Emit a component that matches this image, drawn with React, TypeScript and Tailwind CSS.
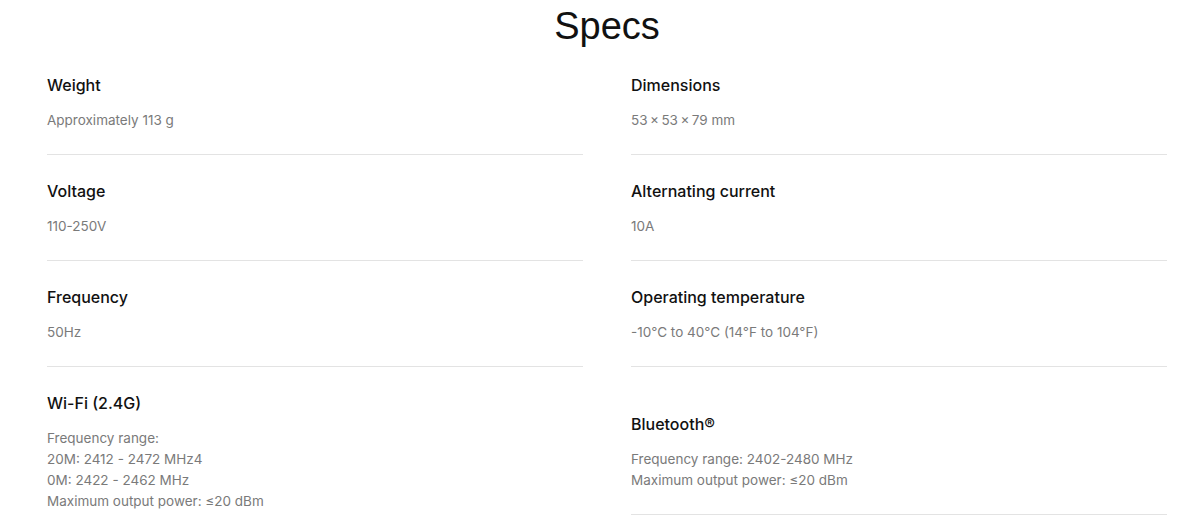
import React from "react";

type Spec = { title: string; lines: string[] };

const rows: [Spec, Spec][] = [
  [
    { title: "Weight", lines: ["Approximately 113 g"] },
    { title: "Dimensions", lines: ["53\u2009×\u200953\u2009×\u200979 mm"] },
  ],
  [
    { title: "Voltage", lines: ["110-250V"] },
    { title: "Alternating current", lines: ["10A"] },
  ],
  [
    { title: "Frequency", lines: ["50Hz"] },
    { title: "Operating temperature", lines: ["-10°C to 40°C (14°F to 104°F)"] },
  ],
  [
    {
      title: "Wi-Fi (2.4G)",
      lines: [
        "Frequency range:",
        "20M: 2412 - 2472 MHz4",
        "0M: 2422 - 2462 MHz",
        "Maximum output power: ≤20 dBm",
      ],
    },
    {
      title: "Bluetooth®",
      lines: ["Frequency range: 2402-2480 MHz", "Maximum output power: ≤20 dBm"],
    },
  ],
];

function Item({ spec }: { spec: Spec }) {
  return (
    <div className="border-b border-[#e3e3e3] pb-[23px]">
      <div className="text-[16px] leading-[24px] font-medium text-[#111111]">{spec.title}</div>
      <div className="mt-[13px] text-[13.5px] leading-[21px] text-[#7a7a7a]">
        {spec.lines.map((l, i) => (
          <div key={i}>{l}</div>
        ))}
      </div>
    </div>
  );
}

export default function App() {
  return (
    <div
      className="w-[1184px] h-[529px] overflow-hidden bg-white"
      style={{ fontFamily: "Inter, 'Noto Sans', sans-serif" }}
    >
      <div className="pl-[47px] w-[1167px]">
        <h1
          className="text-center text-[38px] leading-[52px] text-[#111111] font-normal"
          style={{ fontFamily: "'Liberation Sans', Arial, sans-serif" }}
        >
          Specs
        </h1>
        <div className="mt-[21px] grid grid-cols-2 gap-x-[48px] gap-y-[24px] items-center">
          {rows.map(([a, b], i) => (
            <React.Fragment key={i}>
              <Item spec={a} />
              <Item spec={b} />
            </React.Fragment>
          ))}
        </div>
      </div>
    </div>
  );
}
